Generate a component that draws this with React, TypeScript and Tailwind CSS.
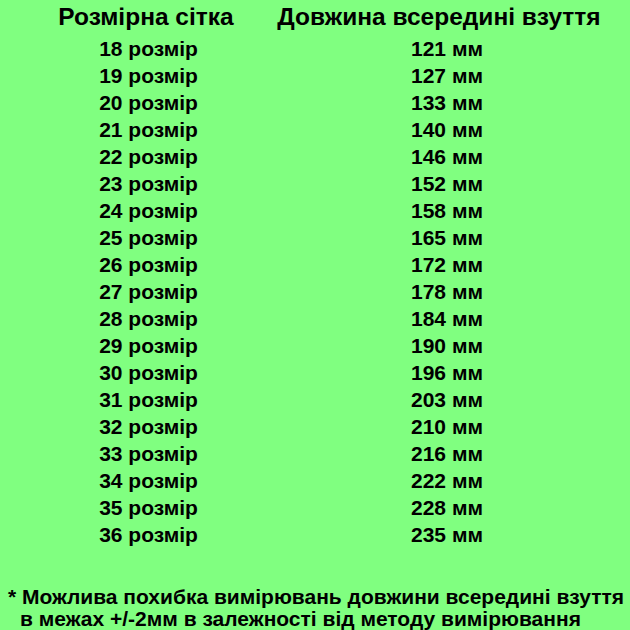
import React from 'react';

const rows: [number, number][] = [
  [18, 121], [19, 127], [20, 133], [21, 140], [22, 146], [23, 152], [24, 158],
  [25, 165], [26, 172], [27, 178], [28, 184], [29, 190], [30, 196], [31, 203],
  [32, 210], [33, 216], [34, 222], [35, 228], [36, 235],
];

export default function App() {
  return (
    <div
      className="w-[630px] h-[630px] bg-[#80ff80] text-black overflow-hidden flex flex-col"
      style={{ fontFamily: '"Liberation Sans", Arial, sans-serif' }}
    >
      {/* Заголовок таблиці */}
      <div className="flex font-bold text-[24.5px] leading-[28px] pt-[3px] whitespace-nowrap">
        <div className="w-[292px] flex justify-center">
          <span>Розмірна сітка</span>
        </div>
        <div className="w-[294px] flex justify-center">
          <span>Довжина всередині взуття</span>
        </div>
      </div>

      {/* Рядки розмірів */}
      <div className="flex flex-col font-bold text-[21px] leading-[27px] mt-[4px] whitespace-nowrap">
        {rows.map(([size, mm]) => (
          <div key={size} className="flex">
            <div className="w-[297px] text-center">{size} розмір</div>
            <div className="w-[300px] text-center">{mm} мм</div>
          </div>
        ))}
      </div>

      {/* Примітка */}
      <div className="mt-auto font-bold text-[21px] leading-[22px] pl-[8px] whitespace-nowrap">
        <div>* Можлива похибка вимірювань довжини всередині взуття</div>
        <div className="pl-[12px]">в межах +/-2мм в залежності від методу вимірювання</div>
      </div>
    </div>
  );
}
